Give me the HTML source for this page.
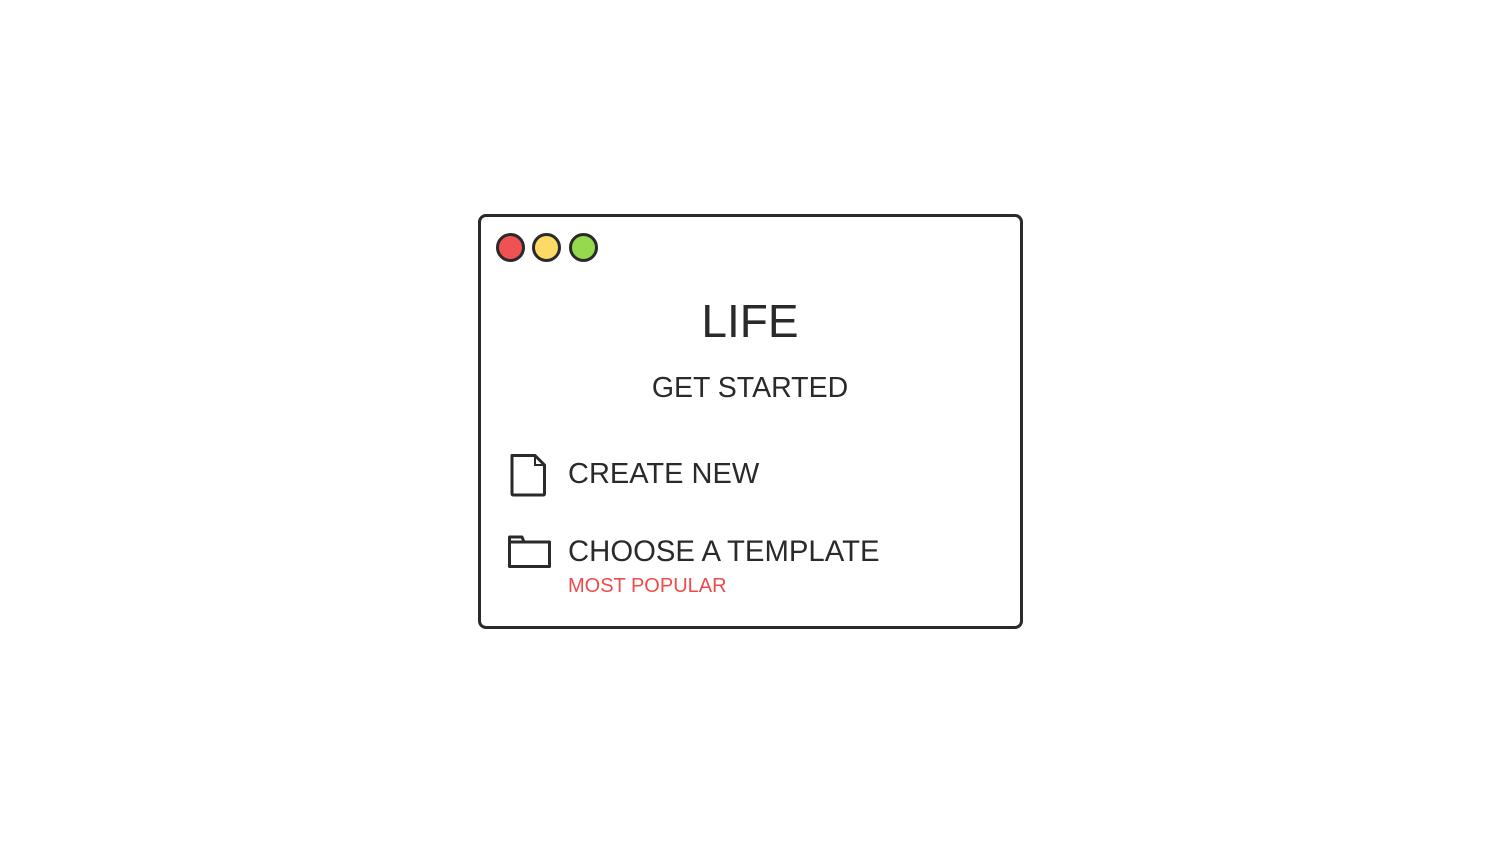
<!DOCTYPE html>
<html><head><style>
body{margin:0;width:1500px;height:844px;background:#fff;position:relative;font-family:"Liberation Sans",sans-serif;color:#2a2a2a;overflow:hidden}
.box{position:absolute;left:478px;top:214px;width:539px;height:409px;border:3.5px solid #2a2a2a;border-radius:8px}
.dot{position:absolute;top:233px;width:23px;height:23px;border:3px solid #2a2a2a;border-radius:50%}
.t{position:absolute;white-space:nowrap;line-height:1}
</style></head><body>
<div class="box"></div>
<div class="dot" style="left:496px;background:#ee5253"></div>
<div class="dot" style="left:532px;background:#fdd966"></div>
<div class="dot" style="left:569px;background:#95d94c"></div>
<div class="t" style="left:0;width:1500px;text-align:center;top:298px;font-size:46px">LIFE</div>
<div class="t" style="left:0;width:1500px;text-align:center;top:374px;font-size:28.5px">GET STARTED</div>
<svg style="position:absolute;left:505px;top:450px" width="50" height="120" viewBox="0 0 50 120">
<path d="M7 5.5 H30 L39.5 15 V43.5 Q39.5 45 38 45 H8.5 Q7 45 7 43.5 Z" fill="none" stroke="#2a2a2a" stroke-width="3" stroke-linejoin="round"/>
<path d="M30 5.5 V15 H39.5" fill="none" stroke="#2a2a2a" stroke-width="2"/>
<path d="M4.5 88 V116.5 H44.5 V92 H19 L17 87 H4.5 Z M4.5 92 H19" fill="none" stroke="#2a2a2a" stroke-width="3" stroke-linejoin="round"/>
</svg>
<div class="t" style="left:568px;top:460px;font-size:29px">CREATE NEW</div>
<div class="t" style="left:568px;top:537px;font-size:29.3px">CHOOSE A TEMPLATE</div>
<div class="t" style="left:568px;top:576px;font-size:20px;color:#ee4b4b">MOST POPULAR</div>
</body></html>
